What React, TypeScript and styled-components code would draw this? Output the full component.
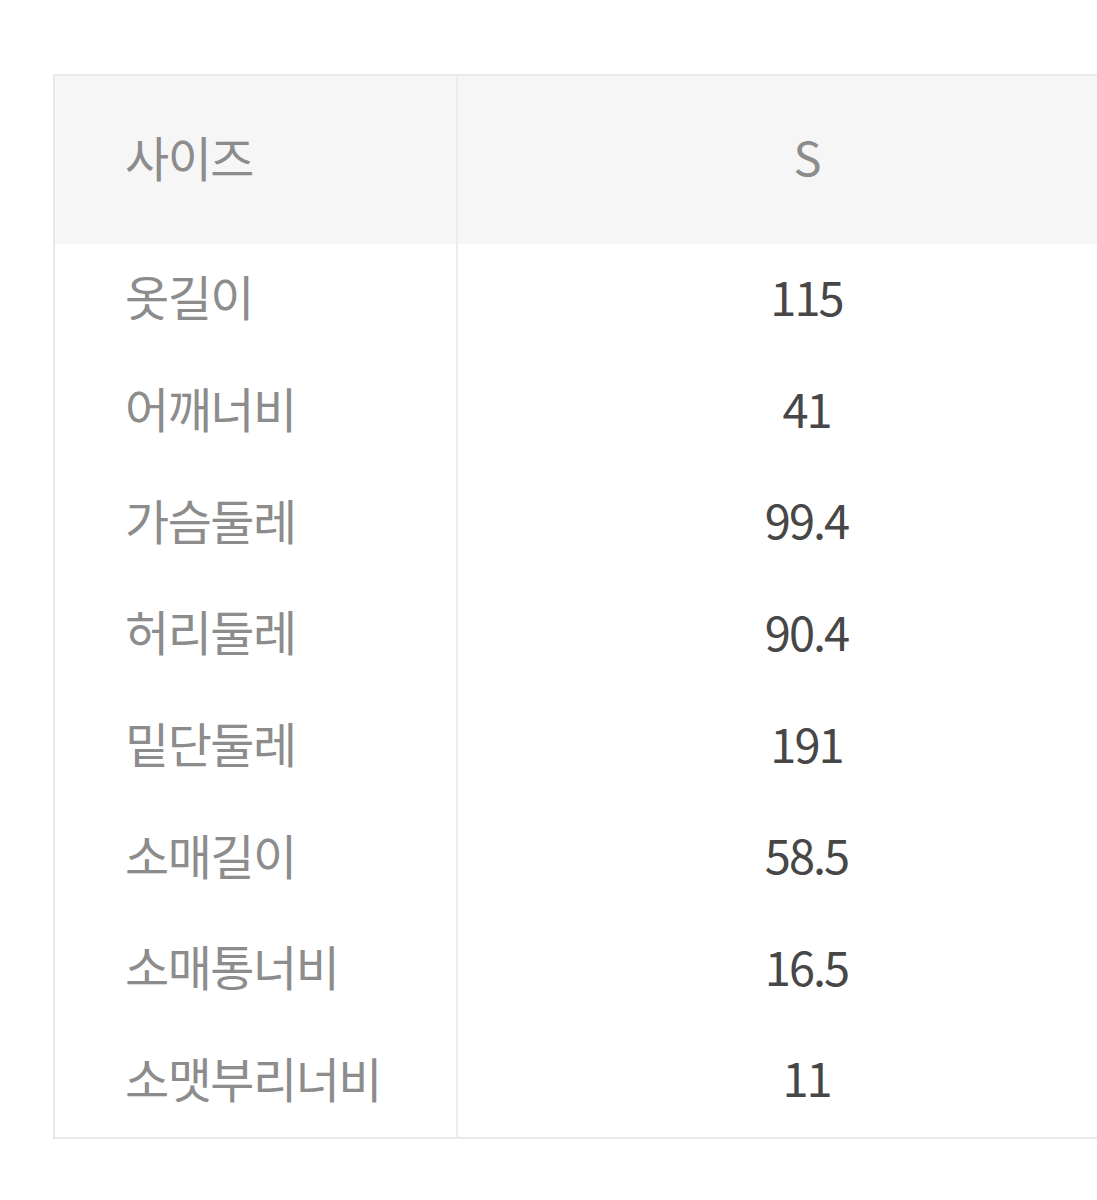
import styled, { createGlobalStyle } from "styled-components"

const GlobalStyle = createGlobalStyle`
  html, body {
    margin: 0;
    padding: 0;
    background: #ffffff;
    overflow: hidden;
  }
  body {
    font-family: "Noto Sans CJK KR", "Noto Sans", sans-serif;
  }
`

const Page = styled.div`
  padding: 74px 0 0 53px;
`

const Tabela = styled.table`
  width: 1044px;
  border-collapse: collapse;
  border: 2px solid #e9e9e9;
  border-right: none;
  table-layout: fixed;
`

const Cabecalho = styled.tr`
  height: 169px;
  background: #f6f6f6;
`

const Linha = styled.tr`
  height: 111.7px;
`

const Rotulo = styled.td`
  box-sizing: border-box;
  width: 403px;
  padding: 0 0 9px 70px;
  border-right: 2px solid #ececec;
  font-size: 48px;
  color: #8c8c8c;
  letter-spacing: -1.5px;
  text-align: left;
  white-space: nowrap;
`

const Valor = styled.td<{ $titulo?: boolean }>`
  padding: 0 0 9px 58px;
  text-align: center;
  font-size: 47px;
  letter-spacing: -2px;
  color: ${({ $titulo }) => ($titulo ? "#8c8c8c" : "#474747")};
`

const medidas: [string, string][] = [
  ["옷길이", "115"],
  ["어깨너비", "41"],
  ["가슴둘레", "99.4"],
  ["허리둘레", "90.4"],
  ["밑단둘레", "191"],
  ["소매길이", "58.5"],
  ["소매통너비", "16.5"],
  ["소맷부리너비", "11"],
]

export default function App() {
  return (
    <>
      <GlobalStyle />
      <Page>
        <Tabela>
          <tbody>
            <Cabecalho>
              <Rotulo>사이즈</Rotulo>
              <Valor $titulo>S</Valor>
            </Cabecalho>
            {medidas.map(([nome, valor]) => (
              <Linha key={nome}>
                <Rotulo>{nome}</Rotulo>
                <Valor>{valor}</Valor>
              </Linha>
            ))}
          </tbody>
        </Tabela>
      </Page>
    </>
  )
}
